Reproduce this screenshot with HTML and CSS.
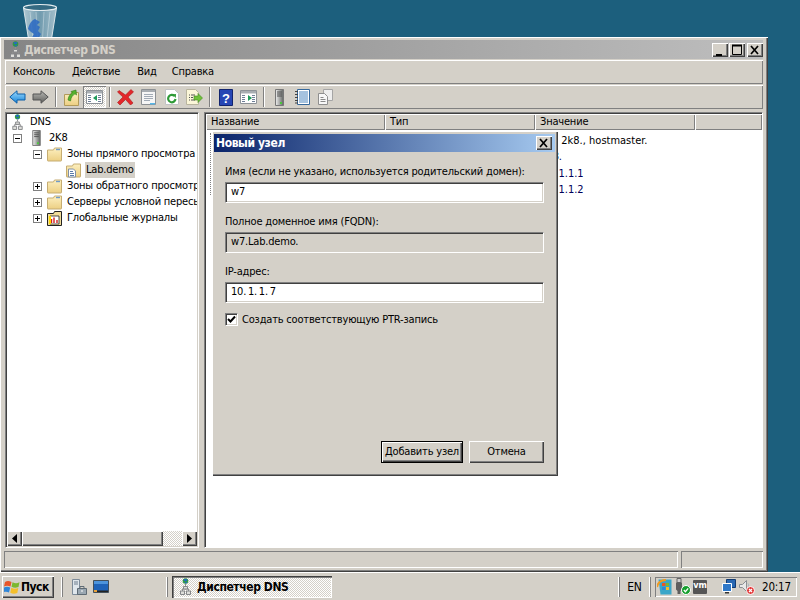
FILE: index.html
```html
<!DOCTYPE html>
<html lang="ru">
<head>
<meta charset="utf-8">
<title>Диспетчер DNS</title>
<link rel="stylesheet" href="styles.css">
</head>
<body>
<svg class="defs" width="0" height="0" aria-hidden="true">
  <defs>
    <linearGradient id="gFolder" x1="0" y1="0" x2="0" y2="1"><stop offset="0" stop-color="#fdf0c0"/><stop offset="1" stop-color="#eccf83"/></linearGradient>
    <linearGradient id="gSrv" x1="0" y1="0" x2="1" y2="0"><stop offset="0" stop-color="#f0f0f0"/><stop offset=".5" stop-color="#a8aaa8"/><stop offset="1" stop-color="#606462"/></linearGradient>
    <linearGradient id="gBlue" x1="0" y1="0" x2="0" y2="1"><stop offset="0" stop-color="#9fdcff"/><stop offset="1" stop-color="#1583d8"/></linearGradient>
    <linearGradient id="gGrey" x1="0" y1="0" x2="0" y2="1"><stop offset="0" stop-color="#b8b8b4"/><stop offset="1" stop-color="#5f5f5c"/></linearGradient>
    <linearGradient id="gBin" x1="0" y1="0" x2="1" y2="0"><stop offset="0" stop-color="#d2e0e6"/><stop offset=".5" stop-color="#86aabb"/><stop offset="1" stop-color="#c4d6de"/></linearGradient>
    <symbol id="i-dns" viewBox="0 0 11 17">
      <circle cx="5.500" cy="3" r="2.800" fill="#2f9a45"/><path d="M3.500 1.500c1-.8 3-.8 4 0l-1 1.500-2 .2zM4.500 5l1.500-1.200 1.200.6-1 1.200z" fill="#2466c8"/>
      <path d="M5.500 6v2M2.500 13v-2h6v2" fill="none" stroke="#8f8f8f"/>
      <path d="M3.500 8.500h4v2.500h-4zM.5 13h4v3.500h-4zM6.500 13h4v3.500h-4z" fill="#dededa" stroke="#85878a"/>
    </symbol>
    <symbol id="i-server" viewBox="0 0 9 17">
      <path d="M.5.500h8v16h-8z" fill="url(#gSrv)" stroke="#777"/>
      <path d="M2 3h5M2 5h5M2 7h5" stroke="#555"/><rect x="5" y="13" width="2" height="2" fill="#4bc83c"/>
    </symbol>
    <symbol id="i-folder" viewBox="0 0 15 14">
      <path d="M.5 2.500v10.500c0 .3.200.5.500.5h13c.3 0 .5-.2.500-.5v-12.500h-7l-1 2z" fill="url(#gFolder)" stroke="#c6ad72"/>
      <path d="M9 2h4" stroke="#6f9bc8" stroke-width="1.400"/>
    </symbol>
    <symbol id="i-zone" viewBox="0 0 15 14">
      <path d="M.5 2.500v10.500c0 .3.200.5.500.5h13c.3 0 .5-.2.500-.5v-12.500h-7l-1 2z" fill="url(#gFolder)" stroke="#c6ad72"/>
      <path d="M2.500 5.500h5l2 2v6h-7z" fill="#fff" stroke="#7f8fa5"/><path d="M4 8h3M4 10h4M4 12h4" stroke="#5a7ba8"/>
    </symbol>
    <symbol id="i-log" viewBox="0 0 15 15">
      <path d="M.5 2.500v12h14v-14h-7l-1 2z" fill="#f0dc9a" stroke="#222"/>
      <path d="M3 5h9v8H3z" fill="#fff" stroke="#222" stroke-width=".8"/>
      <path d="M4.500 12V8M7 12V6.500M10 12V9" stroke="#d12020" stroke-width="1.400"/><path d="M3 5v8" stroke="#ffd800" stroke-width="2"/>
    </symbol>
    <symbol id="i-window" viewBox="0 0 17 14">
      <path d="M.5.500h16v13H.5z" fill="#fff" stroke="#8d9297"/><path d="M1 1h15v2.500H1z" fill="#a8adb2"/>
      <path d="M2 5.500h3M2 7.500h3M2 9.500h3M2 11.500h3M12 5.500h3M12 7.500h3M12 9.500h3M12 11.500h3" stroke="#6f7f96"/>
    </symbol>
  </defs>
</svg>

<main class="desktop">
  <svg class="recycle" viewBox="0 0 36 36" width="36" height="36" role="img" aria-label="Корзина">
    <path d="M1.500 5l5 31h23l5-31z" fill="url(#gBin)" fill-opacity=".8" stroke="#d7e3e8"/>
    <ellipse cx="18" cy="4.500" rx="16.500" ry="3" fill="#356a82" stroke="#e4ecef" stroke-width="1.200"/>
    <path d="M8 9l3 27M14 9l1.500 27M22 9l-1.500 27M28 9l-3 27" stroke="#eaf2f5" stroke-opacity=".4"/>
    <path d="M6 26c1-5 4-9 7-10l5 3-3 3 3 2-2 4 3 3-3 5H9l3-5-3-2z" fill="#2a69c2" fill-opacity=".85"/>
  </svg>

  <section class="window">
    <header class="titlebar">
      <svg class="ti"><use href="#i-dns"/></svg>
      <h1 class="title">Диспетчер DNS</h1>
      <div class="winbtns">
        <span class="cap"><svg width="14" height="12" viewBox="0 0 14 12"><path d="M3 10h6v2H3z"/></svg></span>
        <span class="cap cap-mid"><svg width="14" height="12" viewBox="0 0 14 12"><path d="M2.500 1.500h9v9h-9z" fill="none" stroke="#000"/><path d="M2 1.500h10" stroke="#000" stroke-width="2"/></svg></span>
        <span class="cap"><svg width="14" height="12" viewBox="0 0 14 12"><path d="M3 2l7 8M10 2l-7 8" stroke="#000" stroke-width="1.700"/></svg></span>
      </div>
    </header>

    <nav class="menubar">
      <span class="menu">Консоль</span><span class="menu">Действие</span><span class="menu menu-narrow">Вид</span><span class="menu">Справка</span>
    </nav>

    <div class="toolbar">
      <span class="tb"><svg width="17" height="14" viewBox="0 0 17 14"><path d="M.8 7L8 .8v3.200h8v6H8v3.200z" fill="url(#gBlue)" stroke="#0d5fa8"/></svg></span>
      <span class="tb"><svg width="17" height="14" viewBox="0 0 17 14"><path d="M16.200 7L9 .8v3.200H1v6h8v3.200z" fill="url(#gGrey)" stroke="#555"/></svg></span>
      <span class="tsep"></span>
      <span class="tb"><svg width="15" height="17" viewBox="0 0 15 17"><path d="M.5 5.500v11h14v-13h-7l-1 2z" fill="url(#gFolder)" stroke="#b19a5a"/><path d="M4 11c.5-4 2-6 4.500-7L7 2.500 12 1l.5 5-1.500-1.200C9 6 7 8 6.500 12z" fill="#56b22e" stroke="#2e7d1a" stroke-width=".6"/></svg></span>
      <span class="tb tb-on"><svg width="17" height="14"><use href="#i-window"/></svg><svg class="tb-mark" width="5" height="6" viewBox="0 0 5 6"><path d="M4 0v6L0 3z" fill="#1e9a5a"/></svg></span>
      <span class="tsep"></span>
      <span class="tb"><svg width="17" height="16" viewBox="0 0 17 16"><path d="M2 1.500L8.500 6 14 .5 16.500 3 11 8l5 6-2.500 2L8.500 10.500 3 16 .5 13.500 6 8 .5 3z" fill="#e3272b" stroke="#a91c1c" stroke-width=".6"/></svg></span>
      <span class="tb"><svg width="15" height="16" viewBox="0 0 15 16"><path d="M.5.500h14v15H.5z" fill="#f6f6f6" stroke="#8c9094"/><path d="M1 1h13v2H1z" fill="#a8adb2"/><path d="M3 5.500h9M3 7.500h9M3 9.500h9M3 11.500h6" stroke="#a2abb6"/><path d="M9 14h5v1.500H9z" fill="#57b7e8"/></svg></span>
      <span class="tb"><svg width="14" height="16" viewBox="0 0 14 16"><path d="M.5.500h9l4 4v11H.5z" fill="#fff" stroke="#c0c3c5"/><path d="M10.500 10a3.700 3.700 0 1 1-1-3" fill="none" stroke="#2e9a37" stroke-width="2.200"/><path d="M7.500 5.500l3.500-.5-.2 4z" fill="#2e9a37"/></svg></span>
      <span class="tb"><svg width="17" height="16" viewBox="0 0 17 16"><path d="M.5.500h9l3 3v12H.5z" fill="#fbf6d8" stroke="#b8b49e"/><path d="M3 6h1M5 6h4M3 8.500h1M5 8.500h2M3 11h1M5 11h4" stroke="#555"/><path d="M8 7h4V4.500L16.500 9 12 13.500V11H8z" fill="#6fc03a" stroke="#3f8c1f" stroke-width=".6"/></svg></span>
      <span class="tsep"></span>
      <span class="tb"><svg width="14" height="17" viewBox="0 0 14 17"><path d="M.5.500h13v16H.5z" fill="#2746b4" stroke="#12246e"/><text x="7" y="13.500" class="qmark">?</text></svg></span>
      <span class="tb"><svg width="17" height="14"><use href="#i-window"/></svg><svg class="tb-mark" width="5" height="6" viewBox="0 0 5 6"><path d="M1 0v6l4-3z" fill="#1e9a5a"/></svg></span>
      <span class="tsep"></span>
      <span class="tb"><svg width="9" height="17"><use href="#i-server"/></svg></span>
      <span class="tb"><svg width="15" height="16" viewBox="0 0 15 16"><path d="M2.500.500h12v15h-12z" fill="#fff" stroke="#35689c"/><path d="M4 3h9M4 5h9M4 7h9M4 9h9M4 11h9M4 13h9" stroke="#4d86bf"/><path d="M0 2.500h3M0 5.500h3M0 8.500h3M0 11.500h3M0 14h3" stroke="#444"/></svg></span>
      <span class="tb"><svg width="15" height="16" viewBox="0 0 15 16"><path d="M5.500.500h9v11h-9z" fill="#eee" stroke="#a5a5a5"/><path d="M.5 4.500h6l3 3v8h-9z" fill="#f8f8f8" stroke="#8f8f8f"/><path d="M2.500 8.500h3M2.500 10.500h5M2.500 12.500h5" stroke="#8a8a8a"/></svg></span>
    </div>

    <div class="panes">
      <aside class="tree-pane">
        <ul class="tree">
          <li class="row"><svg class="idns"><use href="#i-dns"/></svg><span class="lbl lbl-root">DNS</span></li>
          <li class="row"><span class="exp exp-minus"></span><svg class="isrv"><use href="#i-server"/></svg><span class="lbl lbl-srv">2K8</span></li>
          <li class="row lv2"><span class="exp exp-minus"></span><svg class="i15"><use href="#i-folder"/></svg><span class="lbl">Зоны прямого просмотра</span></li>
          <li class="row lv3"><svg class="i15"><use href="#i-zone"/></svg><span class="lbl lbl-sel">Lab.demo</span></li>
          <li class="row lv2"><span class="exp exp-plus"></span><svg class="i15"><use href="#i-folder"/></svg><span class="lbl">Зоны обратного просмотра</span></li>
          <li class="row lv2"><span class="exp exp-plus"></span><svg class="i15"><use href="#i-folder"/></svg><span class="lbl">Серверы условной пересылки</span></li>
          <li class="row lv2"><span class="exp exp-plus"></span><svg class="i15"><use href="#i-log"/></svg><span class="lbl">Глобальные журналы</span></li>
        </ul>
        <div class="hscroll">
          <span class="sbtn"><svg width="5" height="9" viewBox="0 0 5 9"><path d="M5 0v9L0 4.500z"/></svg></span>
          <span class="thumb"></span>
          <span class="track"></span>
          <span class="sbtn"><svg width="5" height="9" viewBox="0 0 5 9"><path d="M0 0v9l5-4.500z"/></svg></span>
        </div>
      </aside>

      <section class="list-pane">
        <div class="list-head">
          <span class="hd hd-name">Название</span>
          <span class="hd hd-type">Тип</span>
          <span class="hd hd-value">Значение</span>
          <span class="hd hd-rest"></span>
        </div>
        <div class="list-body">
          <div class="focus-col"></div>
          <div class="values">
            <div class="val val-soa">[1], 2k8., hostmaster.</div>
            <div class="val val-r">2k8.</div>
            <div class="val val-r val-ip">10.1.1.1</div>
            <div class="val val-r val-ip">10.1.1.2</div>
          </div>
        </div>
      </section>
    </div>

    <footer class="status">
      <span class="st st-main"></span>
      <span class="st st-side"></span>
    </footer>
  </section>

  <section class="dialog">
    <header class="dlg-title">
      <h2 class="dlg-name">Новый узел</h2>
      <span class="cap"><svg width="14" height="12" viewBox="0 0 14 12"><path d="M3 2l7 8M10 2l-7 8" stroke="#000" stroke-width="1.700"/></svg></span>
    </header>
    <div class="dlg-body">
      <label class="fld-label">Имя (если не указано, используется родительский домен):</label>
      <div class="input">w7</div>
      <label class="fld-label fld-next">Полное доменное имя (FQDN):</label>
      <div class="input input-off">w7.Lab.demo.</div>
      <label class="fld-label fld-next">IP-адрес:</label>
      <div class="input">10.&#8201;1.&#8201;1.&#8201;7</div>
      <div class="check-row">
        <span class="check"><svg width="11" height="11" viewBox="0 0 11 11"><path d="M2 5l2.500 2.500L9 2.500" fill="none" stroke="#000" stroke-width="2"/></svg></span>
        <span class="check-text">Создать соответствующую PTR-запись</span>
      </div>
      <div class="dlg-actions">
        <button class="btn btn-default" type="button">Добавить узел</button>
        <button class="btn" type="button">Отмена</button>
      </div>
    </div>
  </section>
</main>

<footer class="taskbar">
  <button class="start" type="button">
    <svg width="17" height="16" viewBox="0 0 17 16"><path d="M1 3c2-1.500 4-1.500 6.500 0L6.500 7.500C4 6.500 2 6.500 0 7.500z" fill="#e8562a"/><path d="M8.500 3.200c2.500 1.300 4.500 1.300 7 0L14.500 8c-2.500 1-4.500 1-7-.2z" fill="#7cb82f"/><path d="M0 8.500c2-1 4-1 6.200 0L5 13.500c-2-1-4-1-6 0z" fill="#2f86d8"/><path d="M7.300 8.800c2.500 1.200 4.500 1.200 7 .2l-1 5c-2.500 1-4.500 1-7-.2z" fill="#f4bf2a"/></svg>
    <span>Пуск</span>
  </button>
  <span class="tk-sep tk-sep-a"></span>
  <svg class="ql ql-a" width="15" height="16" viewBox="0 0 15 16"><path d="M.5.500h7v15h-7z" fill="#dfe6ec" stroke="#7d8b99"/><path d="M2 3h4M2 5h4" stroke="#6d7d8d"/><path d="M5.500 9.500h9v6h-9z" fill="#9aa7b2" stroke="#5f6b75"/><path d="M8 9.500v-2h4v2" fill="none" stroke="#5f6b75"/><path d="M9 12h2" stroke="#fff"/></svg>
  <svg class="ql ql-b" width="16" height="14" viewBox="0 0 16 14"><path d="M.5.500h15v12H.5z" fill="#1f63b8" stroke="#44505a"/><path d="M1 1h14v3H1z" fill="#4d94dc"/><path d="M1 10.500h14V12H1z" fill="#222"/><path d="M1 10h3v2H1z" fill="#e8a13a"/></svg>
  <span class="tk-sep tk-sep-b"></span>
  <div class="task">
    <svg width="11" height="17"><use href="#i-dns"/></svg>
    <span>Диспетчер DNS</span>
  </div>
  <span class="tk-sep tk-sep-c"></span>
  <span class="lang">EN</span>
  <span class="tk-sep"></span>
  <div class="tray">
    <svg width="15" height="16" viewBox="0 0 15 16"><path d="M1.500.5h13v15h-11z" fill="#3aa6c8"/><path d="M5 4h3.500v3H5z" fill="#e8562a"/><path d="M9 4h3v3H9z" fill="#7cb82f"/><path d="M5 8h3.500v3H5z" fill="#2f86d8"/><path d="M9 8h3v3H9z" fill="#f4bf2a"/><path d="M0 8c1-5 5-7 9-7" fill="none" stroke="#f09a20" stroke-width="2"/></svg>
    <svg class="tr-usb" width="16" height="17" viewBox="0 0 16 17"><path d="M2 .5h4v4H2z" fill="#cfcfcf" stroke="#666"/><path d="M1 4.500h6v7L5.500 13v3h-3v-3L1 11.500z" fill="#5e5e5e"/><circle cx="11" cy="12" r="4.500" fill="#17a02e" stroke="#fff"/><path d="M8.800 12l1.600 1.700 2.800-3.400" fill="none" stroke="#fff" stroke-width="1.300"/></svg>
    <span class="vm">vm</span>
    <svg class="tr-net" width="14" height="15" viewBox="0 0 14 15"><path d="M4.500.5h9v8h-9z" fill="#2867b2" stroke="#123b72"/><path d="M.5 4.500h9v8h-9z" fill="#2f78c8" stroke="#fff"/><path d="M3 13h4v1.500H3z" fill="#333"/></svg>
    <svg class="tr-snd" width="16" height="16" viewBox="0 0 16 16"><path d="M.5 5.500h3l4-4v11l-4-4h-3z" fill="#e8e8e8" stroke="#8a8f94"/><path d="M9 4.500c1 1 1 4 0 5" fill="none" stroke="#9fb2c2"/><circle cx="11.500" cy="11.500" r="4" fill="#e33a3a" stroke="#fff"/><path d="M10 10l3 3M13 10l-3 3" stroke="#fff" stroke-width="1.200"/></svg>
    <span class="clock">20:17</span>
  </div>
</footer>
</body>
</html>
```

FILE: styles.css
```css
* { box-sizing: border-box; }
html, body { margin: 0; padding: 0; height: 100%; }
body {
  width: 800px; height: 600px; overflow: hidden;
  display: flex; flex-direction: column;
  background: #1c5f7d;
  font: 11px/16px "DejaVu Sans", "Noto Sans", sans-serif;
  font-stretch: condensed;
  letter-spacing: -.19px;
  color: #000;
}
h1, h2, ul { margin: 0; padding: 0; list-style: none; }
svg { display: block; flex: none; }
.defs { position: absolute; }

.desktop { flex: 1; position: relative; }
.recycle { position: absolute; left: 22px; top: 3px; }

/* main window */
.window {
  position: absolute; left: 0; top: 37px; width: 768px; height: 535px;
  background: #d4d0c8;
  padding: 3px 5px 4px;
  display: flex; flex-direction: column;
  box-shadow: inset 1px 1px #fff, inset -1px -1px #404040, inset -2px -2px #808080;
}
.titlebar {
  height: 19px; margin-left: -1px;
  background: linear-gradient(90deg, #858585, #bebebe);
  display: flex; align-items: center; padding: 0 0 0 6px;
}
.ti { width: 11px; height: 17px; }
.title { font-size: 12px; font-weight: bold; color: #d4d0c8; margin-left: 3px; flex: 1; letter-spacing: -.4px; }
.winbtns { display: flex; }
.cap {
  width: 16px; height: 14px; background: #d4d0c8;
  display: flex; align-items: center; justify-content: center;
  box-shadow: inset 1px 1px #fff, inset -1px -1px #404040, inset -2px -2px #808080;
}
.winbtns .cap:first-child { margin-right: 1px; }
.cap-mid { margin-right: 2px; }

.menubar {
  height: 24px; margin-top: 1px; flex: none;
  display: flex; align-items: center;
  box-shadow: inset 1px 1px #fff, inset -1px -1px #808080;
}
.menu { padding: 0 8.5px; }
.menu:first-child { padding-left: 8px; }
.menu-narrow { padding-right: 6.5px; }

.toolbar {
  height: 24px; margin-top: 1px; flex: none;
  display: flex; align-items: center; padding-left: 1px;
  box-shadow: inset 1px 1px #fff, inset -1px -1px #808080;
}
.tb { width: 23px; height: 22px; display: flex; align-items: center; justify-content: center; position: relative; }
.tb-on {
  background: repeating-conic-gradient(#fff 0 25%, #d4d0c8 0 50%) 0 0 / 2px 2px;
  box-shadow: inset 1px 1px #808080, inset -1px -1px #fff;
}
.tb-mark { position: absolute; left: 10px; top: 9px; }
.tsep { width: 2px; height: 20px; margin: 0 3px; background: #808080; border-right: 1px solid #fff; }
.qmark { font: bold 13px "Liberation Sans", sans-serif; fill: #fff; text-anchor: middle; }

/* panes */
.panes { flex: 1; min-height: 0; display: flex; gap: 5px; margin-top: 3px; }
.tree-pane {
  width: 194px; display: flex; flex-direction: column; background: #fff;
  border: 1px solid; border-color: #808080 #fff #fff #808080;
  box-shadow: inset 1px 1px #404040, inset -1px -1px #d4d0c8;
  padding: 1px;
}
.tree { flex: 1; overflow: hidden; }
.row { height: 16px; display: flex; align-items: center; padding-left: 6px; white-space: nowrap; }
.lv2 { padding-left: 26px; }
.lv3 { padding-left: 59px; }
.i15 { width: 15px; height: 15px; }
.idns { width: 11px; height: 16px; margin-left: -1px; }
.isrv { width: 9px; height: 16px; margin-left: 5px; }
.exp {
  width: 9px; height: 9px; border: 1px solid #808080; margin-right: 5px; background: #fff; flex: none;
  background-repeat: no-repeat; background-position: center;
}
.exp-minus { background-image: linear-gradient(#000, #000); background-size: 5px 1px; }
.exp-plus {
  background-image: linear-gradient(#000, #000), linear-gradient(#000, #000);
  background-size: 5px 1px, 1px 5px;
}
.lbl { padding: 0 1px; margin-left: 4px; }
.lbl-root { margin-left: 6px; }
.lbl-srv { margin-left: 7px; }
.lbl-sel { background: #d4d0c8; }

.hscroll { height: 15px; display: flex; background: #d4d0c8; }
.sbtn {
  width: 15px; display: flex; align-items: center; justify-content: center; background: #d4d0c8;
  box-shadow: inset 1px 1px #fff, inset -1px -1px #404040, inset -2px -2px #808080;
}
.thumb { width: 141px; background: #d4d0c8; box-shadow: inset 1px 1px #fff, inset -1px -1px #404040, inset -2px -2px #808080; }
.track { flex: 1; background: repeating-conic-gradient(#fff 0 25%, #d4d0c8 0 50%) 0 0 / 2px 2px; }

.list-pane {
  flex: 1; min-width: 0; display: flex; flex-direction: column; background: #fff;
  border: 1px solid; border-color: #808080 #fff #fff #808080;
  box-shadow: inset 1px 1px #404040;
  padding: 1px 0 0 1px;
}
.list-head { height: 16px; display: flex; flex: none; }
.hd {
  padding-left: 5px; background: #d4d0c8; line-height: 16px;
  box-shadow: inset 1px 1px #fff, inset -1px -1px #808080;
}
.hd-name { width: 179px; }
.hd-type { width: 150px; }
.hd-value { width: 160px; }
.hd-rest { flex: 1; }
.list-body { flex: 1; display: flex; padding: 3px 0 0 4px; }
.focus-col { width: 1px; height: 62px; border-left: 1px dotted #808080; }
.values { margin-left: 330px; width: 160px; }
.val { height: 16.4px; white-space: nowrap; }
.val-soa { letter-spacing: 0; }
.val-r { color: #00005a; }
.val-ip { letter-spacing: -.05px; padding-left: 2px; }

/* dialog */
.dialog {
  position: absolute; left: 212px; top: 131px; width: 346px; height: 345px;
  background: #d4d0c8; padding: 3px 3px 3px 2px;
  display: flex; flex-direction: column;
  box-shadow: inset 1px 1px #fff, inset -1px -1px #404040, inset -2px -2px #808080;
}
.dlg-title {
  height: 18px; flex: none; padding: 0 3px 0 2px;
  background: linear-gradient(90deg, #0a246a, #a6caf0);
  display: flex; align-items: center; justify-content: space-between;
}
.dlg-name { font-size: 12px; font-weight: bold; color: #fff; letter-spacing: -.4px; }
.dlg-body { flex: 1; display: flex; flex-direction: column; padding: 11px 11px 10px 11px; }
.fld-label { display: block; height: 16px; flex: none; line-height: 18px; }
.fld-next { margin-top: 10px; }
.input {
  height: 21px; width: 319px; flex: none; margin-top: 3px; padding-left: 5px; background: #fff; line-height: 18px;
  border: 1px solid; border-color: #808080 #fff #fff #808080;
  box-shadow: inset 1px 1px #404040, inset -1px -1px #d4d0c8;
}
.input-off { background: #d4d0c8; }
.check-row { display: flex; align-items: center; gap: 4px; margin-top: 10px; height: 13px; flex: none; }
.check-text { line-height: 18px; }
.check {
  width: 13px; height: 13px; background: #fff; display: flex; align-items: center; justify-content: center;
  border: 1px solid; border-color: #808080 #fff #fff #808080;
  box-shadow: inset 1px 1px #404040, inset -1px -1px #d4d0c8;
}
.dlg-actions { margin-top: auto; display: flex; justify-content: flex-end; gap: 6px; }
.btn {
  width: 75px; height: 22px; padding: 0; font: inherit; font-stretch: condensed; letter-spacing: inherit; color: #000; background: #d4d0c8; border: 0;
  box-shadow: inset 1px 1px #fff, inset -1px -1px #404040, inset -2px -2px #808080;
}
.btn-default {
  width: 82px; border: 1px solid #000;
}

/* status */
.status { height: 17px; flex: none; margin: 3px 0 0 -1px; display: flex; gap: 3px; }
.st { box-shadow: inset 1px 1px #808080, inset -1px -1px #fff; }
.st-main { flex: 1; }
.st-side { width: 82px; }

/* taskbar */
.taskbar {
  height: 28px; flex: none; background: #d4d0c8; padding: 1px 3px 0 2px;
  display: flex; align-items: center;
  box-shadow: inset 0 1px #fff;
}
.start {
  width: 52px; height: 22px; padding: 0 0 0 2px; border: 0; background: #d4d0c8;
  display: flex; align-items: center; gap: 0;
  font: bold 12px "DejaVu Sans", sans-serif; font-stretch: condensed; letter-spacing: -.5px; color: #000;
  box-shadow: inset 1px 1px #fff, inset -1px -1px #404040, inset -2px -2px #808080;
}
.tk-sep { width: 2px; height: 20px; background: #808080; border-left: 1px solid #fff; flex: none; }
.tk-sep-a { margin-left: 7px; background: #808080; }
.ql-a { margin-left: 9px; }
.ql-b { margin-left: 6px; }
.tk-sep-b { margin-left: 57px; }
.task {
  width: 160px; height: 22px; margin-left: 4px; padding-left: 8px;
  display: flex; align-items: center; gap: 6px; font-weight: bold; font-size: 12px; letter-spacing: -.4px;
  background: repeating-conic-gradient(#fff 0 25%, #d4d0c8 0 50%) 0 0 / 2px 2px;
  box-shadow: inset 1px 1px #404040, inset 2px 2px #808080, inset -1px -1px #fff;
}
.tk-sep-c { margin-left: auto; }
.lang { width: 29px; text-align: center; font-size: 12px; }
.tray {
  width: 142px; height: 20px; margin-left: 4px; padding-left: 2px;
  display: flex; align-items: center;
  box-shadow: inset 1px 1px #808080, inset -1px -1px #fff;
}
.tr-usb { margin-left: 3px; }
.vm {
  width: 14px; height: 14px; margin-left: 2px; background: #555; color: #fff; border-radius: 1px;
  font-size: 9px; line-height: 11px; font-weight: bold; text-align: center; flex: none;
}
.tr-net { margin-left: 15px; }
.tr-snd { margin-left: 3px; }
.clock { margin-left: 7px; font-size: 11.5px; }
```
